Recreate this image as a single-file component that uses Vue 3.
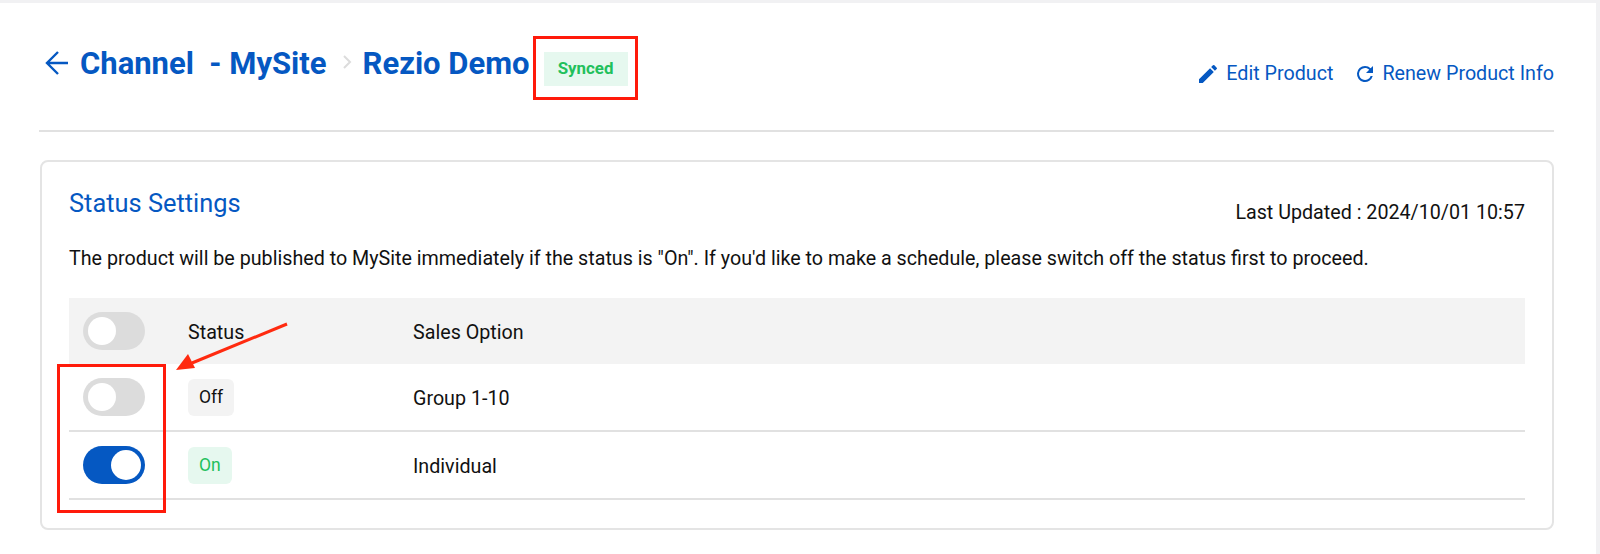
<template>
  <div class="page">
    <div class="sheet">
      <header class="top-bar">
        <div class="crumbs">
          <svg class="back-icon" viewBox="0 0 24 26" width="24" height="26"><path d="M23 13H2M13 2L2 13l11 11" /></svg>
          <h1 class="crumb">Channel&nbsp; - MySite</h1>
          <svg class="sep-icon" viewBox="0 0 10 16" width="10" height="16"><path d="M2 2l6 6-6 6" /></svg>
          <h1 class="crumb">Rezio Demo</h1>
          <span class="synced">Synced</span>
        </div>
        <div class="actions">
          <a class="action">
            <svg viewBox="0 0 24 24" width="24" height="24"><path d="M3 17.25V21h3.75L17.81 9.94l-3.75-3.75L3 17.25zM20.71 7.04a1 1 0 0 0 0-1.41l-2.34-2.34a1 1 0 0 0-1.41 0l-1.83 1.83 3.75 3.75 1.83-1.83z" /></svg>
            Edit Product
          </a>
          <a class="action renew">
            <svg viewBox="0 0 24 24" width="24" height="24"><path d="M17.65 6.35A7.96 7.96 0 0 0 12 4a8 8 0 1 0 7.73 10h-2.08A6 6 0 1 1 12 6c1.66 0 3.14.69 4.22 1.78L13 11h7V4l-2.35 2.35z" /></svg>
            Renew Product Info
          </a>
        </div>
      </header>

      <section class="card">
        <div class="card-head">
          <h2 class="card-title">Status Settings</h2>
          <span class="updated">Last Updated : 2024/10/01 10:57</span>
        </div>
        <p class="note">The product will be published to MySite immediately if the status is "On". If you'd like to make a schedule, please switch off the status first to proceed.</p>

        <div class="table">
          <div class="row row-head">
            <div class="col-switch"><span class="switch"><i></i></span></div>
            <div class="col-status cell-text">Status</div>
            <div class="cell-text">Sales Option</div>
          </div>
          <div v-for="row in rows" :key="row.name" class="row">
            <div class="col-switch"><span class="switch" :class="{ on: row.on }"><i></i></span></div>
            <div class="col-status"><span class="tag" :class="{ 'tag-on': row.on }">{{ row.on ? 'On' : 'Off' }}</span></div>
            <div class="cell-text">{{ row.name }}</div>
          </div>
        </div>
      </section>
    </div>

    <div class="mark mark-synced"></div>
    <div class="mark mark-switches"></div>
    <svg class="arrow" viewBox="0 0 120 55" width="120" height="55">
      <line x1="111" y1="6" x2="16" y2="45" />
      <polygon points="0,52 12,36 19,50" />
    </svg>
  </div>
</template>

<script setup>
const rows = [
  { name: 'Group 1-10', on: false },
  { name: 'Individual', on: true },
]
</script>

<style>
html, body { background: #fff; }
</style>

<style scoped>
.page {
  position: relative;
  width: 1600px;
  height: 554px;
  overflow: hidden;
  background: #f1f1f3;
  padding: 3px 4px 0 0;
  box-sizing: border-box;
  font-family: Roboto, "Liberation Sans", sans-serif;
  color: #111;
}

.sheet {
  height: 100%;
  background: #fff;
  padding: 0 42px 0 39px;
}

.top-bar {
  height: 127px;
  border-bottom: 2px solid #e1e1e1;
  display: flex;
  justify-content: space-between;
}

.crumbs {
  display: flex;
  align-items: center;
  height: 120px;
  padding-left: 6px;
}

.back-icon { fill: none; stroke: #0558c2; stroke-width: 2.4; margin-right: 11px; }
.crumb {
  margin: 0;
  font-size: 31px;
  font-weight: 700;
  color: #0558c2;
  white-space: nowrap;
}
.sep-icon { fill: none; stroke: #dcdcdc; stroke-width: 2; margin: -2px 11px 0 15px; }

.synced {
  margin: 11px 0 0 14px;
  width: 84px;
  height: 34px;
  padding-bottom: 2px;
  box-sizing: border-box;
  background: #e6f8ef;
  color: #22c05c;
  font-size: 16.9px;
  font-weight: 700;
  display: flex;
  align-items: center;
  justify-content: center;
}

.actions {
  display: flex;
  align-items: center;
  gap: 20px;
  height: 141px;
}
.action {
  display: flex;
  align-items: center;
  gap: 6px;
  font-size: 19.7px;
  color: #0558c2;
}
.action svg { fill: #0558c2; }
.renew svg { margin-right: -1px; }

.card {
  margin: 28px 0 0 1px;
  height: 370px;
  box-sizing: border-box;
  border: 2px solid #e4e4e4;
  border-radius: 8px;
  padding: 27px 27px 0;
}

.card-head {
  display: flex;
  justify-content: space-between;
  align-items: flex-start;
}
.card-title {
  margin: 0;
  font-size: 25.4px;
  font-weight: 400;
  line-height: 28px;
  color: #0558c2;
}
.updated { font-size: 19.7px; line-height: 22px; margin-top: 13px; }

.note {
  margin: 23px 0 0;
  font-size: 19.7px;
  line-height: 24px;
  white-space: nowrap;
}

.table { margin-top: 27px; font-size: 19.7px; }
.row {
  display: flex;
  align-items: center;
  height: 68px;
  border-bottom: 2px solid #e1e1e1;
  box-sizing: border-box;
}
.row-head {
  height: 66px;
  background: #f3f3f3;
  border-bottom: 0;
}
.cell-text { padding-top: 2px; }
.col-switch { width: 119px; padding-left: 14px; box-sizing: border-box; display: flex; }
.col-status { width: 225px; }

.switch {
  position: relative;
  width: 62px;
  height: 38px;
  border-radius: 19px;
  background: #dcdcdc;
}
.switch i {
  position: absolute;
  top: 5px;
  left: 5px;
  width: 28px;
  height: 28px;
  border-radius: 50%;
  background: #fff;
}
.switch.on { background: #0558c2; }
.switch.on i { left: 28px; top: 4px; width: 30px; height: 30px; }

.tag {
  display: inline-flex;
  align-items: center;
  justify-content: center;
  height: 37px;
  padding: 0 11px;
  border-radius: 6px;
  background: #f3f3f3;
  font-size: 17.5px;
  vertical-align: middle;
}
.tag-on { background: #e6f8ef; color: #22c05c; }

.mark {
  position: absolute;
  border: 3px solid #ff1a0a;
  box-sizing: border-box;
}
.mark-synced { left: 533px; top: 36px; width: 105px; height: 64px; }
.mark-switches { left: 57px; top: 364px; width: 109px; height: 149px; }

.arrow {
  position: absolute;
  left: 176px;
  top: 318px;
}
.arrow line { stroke: #ff2a0f; stroke-width: 3; }
.arrow polygon { fill: #ff2a0f; }
</style>
